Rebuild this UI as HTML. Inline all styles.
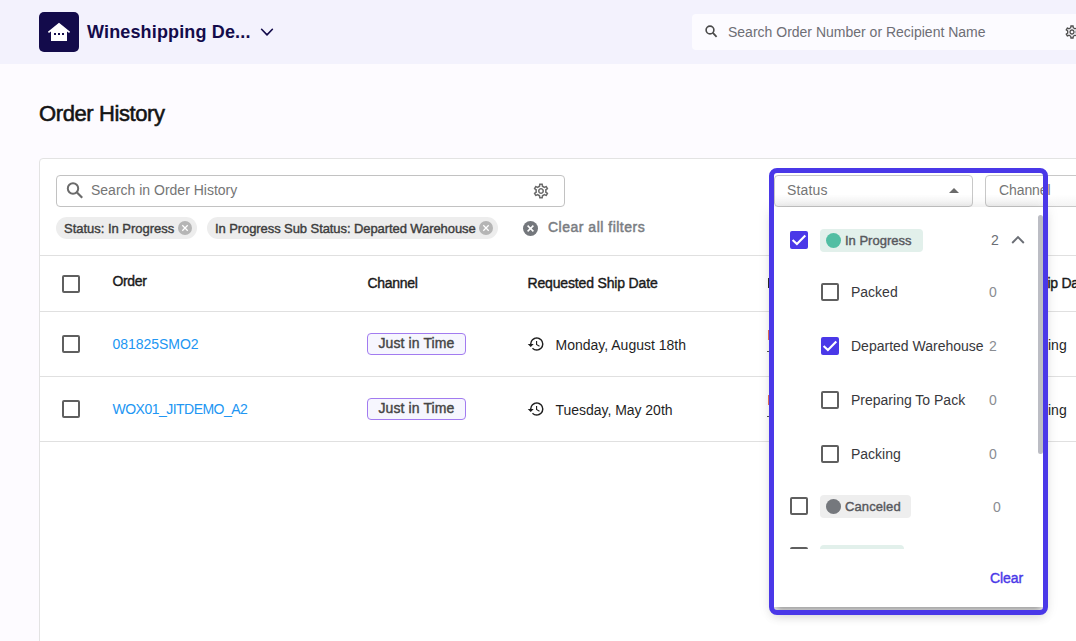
<!DOCTYPE html>
<html><head><meta charset="utf-8">
<style>
*{box-sizing:border-box;margin:0;padding:0}
html,body{width:1076px;height:641px;overflow:hidden}
body{background:#fdfbff;font-family:"Liberation Sans",sans-serif;position:relative;color:#212121}
.a{position:absolute}
.t{position:absolute;white-space:nowrap;line-height:1}
.med{-webkit-text-stroke:0.4px currentColor}
#hdr{left:0;top:0;width:1076px;height:64px;background:#f3f2fd}
#logo{left:39px;top:12px;width:40px;height:40px;background:#130b4b;border-radius:5px}
#card{left:39px;top:158px;width:1100px;height:600px;background:#fff;border:1px solid #e3e3e3;border-radius:4px}
.hl{position:absolute;left:40px;width:1040px;height:1px;background:#e0e0e0}
.cb{position:absolute;width:18px;height:18px;border:2px solid #5f5f5f;border-radius:2px}
.cbon{position:absolute;width:18px;height:18px;background:#4a38e8;border-radius:2px}
.chip{position:absolute;height:22px;background:#ededed;border-radius:11px}
.xic{position:absolute;width:14px;height:14px;border-radius:50%;background:#b5b5b5}
.jit{position:absolute;width:99px;height:22px;border:1px solid #a27bf0;background:#f6f6fe;border-radius:4px}
</style></head><body>

<!-- header -->
<div id="hdr" class="a"></div>
<div id="logo" class="a">
  <svg width="40" height="40" viewBox="0 0 40 40" style="position:absolute;left:0;top:0">
    <path d="M8.9 19.7 L20 10.8 L31.1 19.7 L30.1 21 L28 19.5 L28 29 L12 29 L12 19.5 L9.9 21 Z" fill="#fff"/>
    <rect x="15" y="21" width="2" height="2" fill="#130b4b"/>
    <rect x="19" y="21" width="2" height="2" fill="#130b4b"/>
    <rect x="23" y="21" width="2" height="2" fill="#130b4b"/>
  </svg>
</div>
<div class="t" style="left:87px;top:22.7px;font-size:18px;font-weight:700;color:#130b4b;letter-spacing:0.15px">Wineshipping De...</div>
<svg class="a" style="left:259px;top:26px" width="16" height="12" viewBox="0 0 16 12"><path d="M2.6 3.3 L8 8.9 L13.4 3.3" stroke="#130b4b" stroke-width="1.6" stroke-linecap="round" stroke-linejoin="round" fill="none"/></svg>

<div class="a" style="left:692px;top:14px;width:400px;height:36px;background:#fcfbff;border-radius:4px"></div>
<svg class="a" style="left:704px;top:24px" width="16" height="16" viewBox="0 0 16 16"><circle cx="6" cy="6" r="3.9" stroke="#4a4a4a" stroke-width="1.6" fill="none"/><path d="M8.9 8.9 L12.6 12.8" stroke="#4a4a4a" stroke-width="1.8"/></svg>
<div class="t" style="left:728px;top:25px;font-size:14px;color:#6e6e75">Search Order Number or Recipient Name</div>
<svg class="a" style="left:1064px;top:24px" width="16" height="16" viewBox="0 0 24 24"><path fill="#4f4f4f" d="M19.43 12.98c.04-.32.07-.64.07-.98 0-.34-.03-.66-.07-.98l2.11-1.65c.19-.15.24-.42.12-.64l-2-3.46c-.09-.16-.26-.25-.44-.25-.06 0-.12.01-.17.03l-2.49 1c-.52-.4-1.08-.73-1.69-.98l-.38-2.65C14.46 2.18 14.25 2 14 2h-4c-.25 0-.46.18-.49.42l-.38 2.65c-.61.25-1.17.59-1.69.98l-2.49-1c-.06-.02-.12-.03-.18-.03-.17 0-.34.09-.43.25l-2 3.46c-.13.22-.07.49.12.64l2.11 1.65c-.04.32-.07.65-.07.98 0 .33.03.66.07.98l-2.11 1.65c-.19.15-.24.42-.12.64l2 3.46c.09.16.26.25.44.25.06 0 .12-.01.17-.03l2.49-1c.52.4 1.08.73 1.69.98l.38 2.65c.03.24.24.42.49.42h4c.25 0 .46-.18.49-.42l.38-2.65c.61-.25 1.17-.59 1.69-.98l2.49 1c.06.02.12.03.18.03.17 0 .34-.09.43-.25l2-3.46c.12-.22.07-.49-.12-.64l-2.11-1.65zm-1.98-1.71c.04.31.05.52.05.73 0 .21-.02.43-.05.73l-.14 1.13.89.7 1.08.84-.7 1.21-1.27-.51-1.04-.42-.9.68c-.43.32-.84.56-1.25.73l-1.06.43-.16 1.13-.2 1.35h-1.4l-.19-1.35-.16-1.13-1.06-.43c-.43-.18-.83-.41-1.23-.71l-.91-.7-1.06.43-1.27.51-.7-1.21 1.08-.84.89-.7-.14-1.13c-.03-.31-.05-.54-.05-.74s.02-.43.05-.73l.14-1.13-.89-.7-1.08-.84.7-1.21 1.27.51 1.04.42.9-.68c.43-.32.84-.56 1.25-.73l1.06-.43.16-1.13.2-1.35h1.39l.19 1.35.16 1.13 1.06.43c.43.18.83.41 1.23.71l.91.7 1.06-.43 1.27-.51.7 1.21-1.07.85-.89.7.14 1.13zM12 8c-2.21 0-4 1.79-4 4s1.79 4 4 4 4-1.79 4-4-1.79-4-4-4zm0 6c-1.1 0-2-.9-2-2s.9-2 2-2 2 .9 2 2-.9 2-2 2z"/></svg>

<!-- title -->
<div class="t" style="left:39px;top:102.9px;font-size:22px;color:#141414;letter-spacing:-0.4px;-webkit-text-stroke:0.55px #141414">Order History</div>

<!-- card -->
<div id="card" class="a"></div>

<!-- search input -->
<div class="a" style="left:56px;top:175px;width:509px;height:32px;border:1px solid #c2c2c2;border-radius:4px"></div>
<svg class="a" style="left:64px;top:179px" width="24" height="24" viewBox="0 0 24 24"><circle cx="9" cy="9.5" r="5.2" stroke="#6b6b6b" stroke-width="2" fill="none"/><path d="M13 13.5 L18.2 18.7" stroke="#6b6b6b" stroke-width="2.2"/></svg>
<div class="t" style="left:91px;top:183px;font-size:14px;color:#757575">Search in Order History</div>
<svg class="a" style="left:532px;top:182px" width="18" height="18" viewBox="0 0 24 24"><path fill="#6b6b6b" d="M19.43 12.98c.04-.32.07-.64.07-.98 0-.34-.03-.66-.07-.98l2.11-1.65c.19-.15.24-.42.12-.64l-2-3.46c-.09-.16-.26-.25-.44-.25-.06 0-.12.01-.17.03l-2.49 1c-.52-.4-1.08-.73-1.690-.98l-.38-2.65C14.46 2.180 14.25 2 14 2h-4c-.25 0-.46.18-.49.42l-.38 2.65c-.61.25-1.17.59-1.69.98l-2.49-1c-.06-.02-.12-.03-.18-.03-.17 0-.34.09-.43.25l-2 3.46c-.13.22-.07.49.12.64l2.11 1.65c-.04.32-.07.65-.07.98 0 .33.03.66.07.98l-2.11 1.650c-.19.15-.24.42-.12.64l2 3.46c.09.16.26.25.44.25.06 0 .12-.01.17-.03l2.49-1c.52.4 1.08.73 1.69.98l.38 2.65c.03.24.24.42.49.42h4c.25 0 .46-.18.49-.42l.38-2.65c.61-.25 1.17-.59 1.69-.98l2.49 1c.06.02.12.03.18.03.17 0 .34-.09.43-.25l2-3.46c.12-.22.07-.49-.12-.64l-2.11-1.65zm-1.98-1.71c.04.31.05.52.05.73 0 .21-.02.43-.05.73l-.14 1.13.89.7 1.08.84-.7 1.21-1.27-.51-1.04-.42-.9.68c-.43.32-.84.56-1.25.73l-1.06.43-.16 1.13-.2 1.35h-1.4l-.19-1.35-.16-1.13-1.06-.43c-.43-.18-.83-.41-1.23-.71l-.91-.7-1.06.43-1.27.51-.7-1.21 1.08-.84.89-.7-.14-1.13c-.03-.31-.05-.54-.05-.74s.02-.43.05-.73l.14-1.13-.89-.7-1.08-.84.7-1.21 1.27.51 1.04.42.9-.68c.43-.32.84-.56 1.25-.73l1.06-.43.16-1.13.2-1.35h1.39l.19 1.35.16 1.13 1.060.43c.43.18.83.41 1.23.71l.91.7 1.06-.43 1.27-.51.7 1.21-1.07.85-.89.7.14 1.13zM12 8c-2.21 0-4 1.79-4 4s1.79 4 4 4 4-1.79 4-4-1.79-4-4-4zm0 6c-1.1 0-2-.9-2-2s.9-2 2-2 2 .9 2 2-.9 2-2 2z"/></svg>

<!-- chips -->
<div class="chip" style="left:56px;top:217px;width:141px"></div>
<div class="t med" style="left:64px;top:222px;font-size:13px;color:#3d3d3d;letter-spacing:-0.02px">Status: In Progress</div>
<div class="xic" style="left:178px;top:221px"><svg width="14" height="14" viewBox="0 0 14 14" style="position:absolute;left:0;top:0"><path d="M4.3 4.3L9.7 9.7M9.7 4.3L4.3 9.7" stroke="#fff" stroke-width="1.25"/></svg></div>

<div class="chip" style="left:207px;top:217px;width:291px"></div>
<div class="t med" style="left:215px;top:222px;font-size:13px;color:#3d3d3d;letter-spacing:-0.08px">In Progress Sub Status: Departed Warehouse</div>
<div class="xic" style="left:479px;top:221px"><svg width="14" height="14" viewBox="0 0 14 14" style="position:absolute;left:0;top:0"><path d="M4.3 4.3L9.7 9.7M9.7 4.3L4.3 9.7" stroke="#fff" stroke-width="1.25"/></svg></div>

<div class="a" style="left:522.8px;top:220.6px;width:15px;height:15px;border-radius:50%;background:#74777c"><svg width="15" height="15" viewBox="0 0 15 15" style="position:absolute;left:0;top:0"><path d="M4.6 4.6L10.4 10.4M10.4 4.6L4.6 10.4" stroke="#fff" stroke-width="1.5"/></svg></div>
<div class="t" style="-webkit-text-stroke:0.5px #7a7d82;left:548px;top:220.3px;font-size:14px;color:#7a7d82;letter-spacing:0.5px">Clear all filters</div>

<!-- table lines -->
<div class="hl" style="top:255px"></div>
<div class="hl" style="top:311px"></div>
<div class="hl" style="top:376px"></div>
<div class="hl" style="top:441px"></div>

<!-- header row -->
<div class="cb" style="left:62px;top:275px"></div>
<div class="t med" style="left:112.5px;top:274px;font-size:14px;color:#1a1a1a;letter-spacing:-0.35px">Order</div>
<div class="t med" style="left:367.5px;top:276px;font-size:14px;color:#1a1a1a;letter-spacing:-0.3px">Channel</div>
<div class="t med" style="left:527.5px;top:276px;font-size:14px;color:#1a1a1a;letter-spacing:-0.16px">Requested Ship Date</div>
<div class="t med" style="left:1047.5px;top:276px;font-size:14px;color:#1a1a1a;letter-spacing:-0.3px">ip Da</div>

<!-- row 1 -->
<div class="cb" style="left:62px;top:335px"></div>
<div class="t" style="left:112.5px;top:337px;font-size:14px;color:#2196f3;letter-spacing:-0.03px">081825SMO2</div>
<div class="jit" style="left:367px;top:333px"></div>
<div class="t med" style="left:378.5px;top:336px;font-size:14px;color:#454545;letter-spacing:0.1px">Just in Time</div>
<svg class="a" style="left:527px;top:335px" width="18" height="18" viewBox="0 0 24 24"><path fill="#1f1f1f" d="M13 3a9 9 0 0 0-9 9H1l3.89 3.89.07.14L9 12H6c0-3.87 3.13-7 7-7s7 3.13 7 7-3.13 7-7 7c-1.93 0-3.68-.79-4.94-2.06l-1.42 1.42A8.954 8.954 0 0 0 13 21a9 9 0 0 0 0-18zm-1 5v5l4.28 2.54.72-1.21-3.5-2.08V8H12z"/></svg>
<div class="t" style="left:555.5px;top:338px;font-size:14px;color:#1f1f1f">Monday, August 18th</div>
<div class="t" style="left:1048px;top:338px;font-size:14px;color:#1f1f1f">ing</div>

<!-- row 2 -->
<div class="cb" style="left:62px;top:400px"></div>
<div class="t" style="left:112.5px;top:402px;font-size:14px;color:#2196f3;letter-spacing:-0.52px">WOX01_JITDEMO_A2</div>
<div class="jit" style="left:367px;top:398px"></div>
<div class="t med" style="left:378.5px;top:401px;font-size:14px;color:#454545;letter-spacing:0.1px">Just in Time</div>
<svg class="a" style="left:527px;top:400px" width="18" height="18" viewBox="0 0 24 24"><path fill="#1f1f1f" d="M13 3a9 9 0 0 0-9 9H1l3.89 3.89.07.14L9 12H6c0-3.87 3.13-7 7-7s7 3.13 7 7-3.13 7-7 7c-1.930 0-3.68-.79-4.94-2.06l-1.42 1.42A8.954 8.954 0 0 0 13 21a9 9 0 0 0 0-18zm-1 5v5l4.28 2.54.72-1.21-3.5-2.08V8H12z"/></svg>
<div class="t" style="left:555.5px;top:403px;font-size:14px;color:#1f1f1f;letter-spacing:-0.03px">Tuesday, May 20th</div>
<div class="t" style="left:1048px;top:403px;font-size:14px;color:#1f1f1f">ing</div>

<!-- hidden col bits -->
<div class="a" style="left:767.5px;top:278px;width:1.5px;height:10px;background:#2a2a2a"></div>
<div class="a" style="left:768px;top:330px;width:1px;height:10px;background:#e8735e"></div>
<div class="a" style="left:767px;top:351px;width:2px;height:1px;background:#555"></div>
<div class="a" style="left:768px;top:395px;width:1px;height:10px;background:#e8735e"></div>
<div class="a" style="left:767px;top:416px;width:2px;height:1px;background:#555"></div>
<!-- DROPDOWN -->

<!-- status/channel selects -->
<div class="a" style="left:985px;top:175px;width:200px;height:32px;border:1px solid #c8c8c8;border-radius:4px;background:linear-gradient(#fff 62%,#f4f4f4)"></div>
<div class="t" style="left:999px;top:183px;font-size:14px;color:#757575;letter-spacing:-0.1px">Channel</div>
<div class="a" style="left:774px;top:175px;width:199px;height:32px;border:1px solid #c8c8c8;border-radius:4px;background:linear-gradient(#fff 62%,#f4f4f4)"></div>
<div class="t" style="left:787px;top:183px;font-size:14px;color:#757575;letter-spacing:0.15px">Status</div>
<svg class="a" style="left:949px;top:188px" width="10" height="5" viewBox="0 0 10 5"><path d="M0 5L5 0L10 5Z" fill="#6a6a6a"/></svg>

<!-- panel -->
<div class="a" style="left:774px;top:207px;width:269px;height:400px;background:#fff;box-shadow:0px 5px 5px -3px rgba(0,0,0,0.2),0px 8px 10px 1px rgba(0,0,0,0.14),0px 3px 14px 2px rgba(0,0,0,0.12)"></div>
<div class="a" style="left:774px;top:207px;width:269px;height:342px;overflow:hidden">
  <div class="cbon" style="left:16px;top:24px"><svg width="18" height="18" viewBox="0 0 18 18" style="position:absolute;left:0;top:0"><path d="M2.6 9 L6.9 13.1 L15.3 4.4" stroke="#fff" stroke-width="2.1" fill="none"/></svg></div>
  <div class="a" style="left:46px;top:22px;width:103px;height:23px;background:#e2f0eb;border-radius:4px"></div>
  <div class="a" style="left:52px;top:26px;width:15px;height:15px;border-radius:50%;background:#52bea3"></div>
  <div class="t med" style="left:71px;top:26.5px;font-size:13px;color:#57585d;letter-spacing:0px">In Progress</div>
  <div class="t" style="left:217px;top:25.8px;font-size:14px;color:#6b6e75">2</div>
  <svg class="a" style="left:237px;top:28px" width="14" height="10" viewBox="0 0 14 10"><path d="M1.2 8 L7 2.2 L12.8 8" stroke="#6b6e75" stroke-width="1.9" fill="none"/></svg>

  <div class="cb" style="left:47px;top:76px"></div>
  <div class="t" style="left:77px;top:78px;font-size:14px;color:#38383c">Packed</div>
  <div class="t" style="left:215px;top:78px;font-size:14px;color:#8a8d92">0</div>

  <div class="cbon" style="left:47px;top:130px"><svg width="18" height="18" viewBox="0 0 18 18" style="position:absolute;left:0;top:0"><path d="M2.6 9 L6.9 13.1 L15.3 4.4" stroke="#fff" stroke-width="2.1" fill="none"/></svg></div>
  <div class="t" style="left:77px;top:132px;font-size:14px;color:#38383c">Departed Warehouse</div>
  <div class="t" style="left:215px;top:132px;font-size:14px;color:#8a8d92">2</div>

  <div class="cb" style="left:47px;top:184px"></div>
  <div class="t" style="left:77px;top:186px;font-size:14px;color:#38383c">Preparing To Pack</div>
  <div class="t" style="left:215px;top:186px;font-size:14px;color:#8a8d92">0</div>

  <div class="cb" style="left:47px;top:238px"></div>
  <div class="t" style="left:77px;top:240px;font-size:14px;color:#38383c">Packing</div>
  <div class="t" style="left:215px;top:240px;font-size:14px;color:#8a8d92">0</div>

  <div class="cb" style="left:16px;top:290px"></div>
  <div class="a" style="left:46px;top:288px;width:91px;height:23px;background:#eeeeee;border-radius:4px"></div>
  <div class="a" style="left:52px;top:292px;width:15px;height:15px;border-radius:50%;background:#75787d"></div>
  <div class="t med" style="left:71px;top:292.5px;font-size:13px;color:#57585d;letter-spacing:0.1px">Canceled</div>
  <div class="t" style="left:219px;top:292.5px;font-size:14px;color:#8a8d92">0</div>

  <div class="cb" style="left:16px;top:340px"></div>
  <div class="a" style="left:46px;top:338px;width:84px;height:23px;background:#e2f0eb;border-radius:4px"></div>
  <div class="a" style="left:264px;top:8px;width:5px;height:239px;background:#bcbdc4;border-radius:3px"></div>
</div>
<div class="t med" style="left:990px;top:570.5px;font-size:14px;color:#4a38e8;letter-spacing:-0.05px">Clear</div>

<!-- purple overlay -->
<div class="a" style="left:769px;top:168px;width:279px;height:447px;border:5px solid #4a38e8;border-radius:8px"></div>


</body></html>
